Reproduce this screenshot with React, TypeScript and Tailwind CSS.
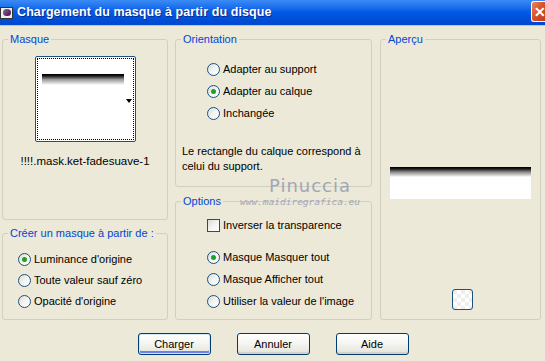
import React from "react";

function Radio({ checked, label }: { checked?: boolean; label: string }) {
  return (
    <div className="flex items-center h-[22px]">
      <span className="relative w-[13px] h-[13px] rounded-full border border-[#1c5180] bg-gradient-to-br from-[#dcdcd5] via-[#f4f4f0] to-white flex items-center justify-center">
        {checked && <span className="w-[5px] h-[5px] rounded-full bg-[#21a121]" />}
      </span>
      <span className="ml-[3px]">{label}</span>
    </div>
  );
}

function Btn({ label, def }: { label: string; def?: boolean }) {
  return (
    <button
      className={
        "w-[73px] h-[22px] rounded-[3px] border border-[#003c74] bg-gradient-to-b from-white via-[#f4f4f0] to-[#e3e2d9] text-black flex items-center justify-center " +
        (def ? "shadow-[inset_0_0_0_1px_#cee7ff,inset_0_-2px_0_1px_#6982ee]" : "shadow-[inset_0_-2px_0_0_#d6d0c5]")
      }
    >
      {label}
    </button>
  );
}

const Legend = ({ children }: { children: React.ReactNode }) => (
  <legend className="ml-[5px] px-[2px] text-[#0046d5] leading-[14px]">{children}</legend>
);

export default function App() {
  return (
    <div
      className="w-[545px] h-[361px] bg-[#ece9d8] text-[11px] text-black overflow-hidden relative"
      style={{ fontFamily: '"Liberation Sans", Arial, sans-serif' }}
    >
      {/* Title bar */}
      <div className="h-[26px] bg-gradient-to-b from-[#3b8bf5] via-[#0058e6] to-[#0048cc] flex items-center border-b border-[#c8c5b4]">
        <div className="w-[15px] h-[14px] flex items-center">
          <div className="w-[13px] h-[12px] bg-[#f0f0f0] border border-[#333] flex items-center justify-center">
            <div className="w-[8px] h-[7px] rounded-full bg-gradient-to-br from-[#1a8a2a] via-[#7a2a8a] to-[#222]" />
          </div>
        </div>
        <div className="ml-[2px] text-white font-bold text-[12.5px] tracking-[0.1px] [text-shadow:1px_1px_0_#0a2a8a]">
          Chargement du masque à partir du disque
        </div>
        <div className="ml-auto w-[14px] h-[21px] self-start mt-[1px] rounded-l-[3px] border border-white border-r-0 bg-gradient-to-br from-[#e8835f] via-[#d8502a] to-[#c03a16] flex items-center justify-start pl-[2px] text-white font-bold text-[14px] leading-none">
          ✕
        </div>
      </div>

      {/* Main area */}
      <div className="flex pt-[6px] pl-[2px]">
        {/* Left column */}
        <div className="w-[166px] flex flex-col">
          <fieldset className="h-[188px] border border-[#d0d0bf] rounded-[3px]">
            <Legend>Masque</Legend>
            <div className="flex flex-col items-center">
              <div className="mt-[10px] w-[101px] h-[86px] rounded-[2px] border border-[#1c5180] bg-white p-[1px]">
                <div className="w-full h-full border border-dotted border-black relative">
                  <div className="absolute left-[4px] top-[15px] w-[82px] h-[11px] bg-gradient-to-b from-black via-[#9a9a9a] to-white" />
                  <div className="absolute right-[1px] top-[40px] w-0 h-0 border-l-[3px] border-r-[3px] border-t-[4px] border-l-transparent border-r-transparent border-t-black" />
                </div>
              </div>
              <div className="mt-[11px] text-[11.5px]">!!!!.mask.ket-fadesuave-1</div>
            </div>
          </fieldset>
          <fieldset className="mt-[6px] h-[94px] border border-[#d0d0bf] rounded-[3px]">
            <Legend>Créer un masque à partir de :</Legend>
            <div className="pl-[15px] pt-[8px]">
              <div className="flex flex-col gap-[-1px]">
                <Radio checked label="Luminance d'origine" />
                <div className="-mt-[1px]"><Radio label="Toute valeur sauf zéro" /></div>
                <div className="-mt-[1px]"><Radio label="Opacité d'origine" /></div>
              </div>
            </div>
          </fieldset>
        </div>

        {/* Middle column */}
        <div className="ml-[7px] w-[197px] flex flex-col">
          <fieldset className="h-[155px] border border-[#d0d0bf] rounded-[3px]">
            <Legend>Orientation</Legend>
            <div className="pl-[31px] pt-[12px]">
              <Radio label="Adapter au support" />
              <Radio checked label="Adapter au calque" />
              <Radio label="Inchangée" />
            </div>
            <p className="pl-[6px] mt-[20px] leading-[15px]">
              Le rectangle du calque correspond à
              <br />
              celui du support.
            </p>
          </fieldset>
          <fieldset className="mt-[7px] h-[126px] border border-[#d0d0bf] rounded-[3px]">
            <Legend>Options</Legend>
            <div className="pl-[31px] pt-[10px]">
              <div className="flex items-center h-[14px]">
                <span className="w-[13px] h-[13px] border border-[#1c5180] bg-gradient-to-br from-[#dcdcd5] via-[#f4f4f0] to-white" />
                <span className="ml-[3px]">Inverser la transparence</span>
              </div>
              <div className="mt-[14px]">
                <Radio checked label="Masque Masquer tout" />
                <Radio label="Masque Afficher tout" />
                <Radio label="Utiliser la valeur de l'image" />
              </div>
            </div>
          </fieldset>
        </div>

        {/* Right column */}
        <div className="ml-[8px] w-[161px]">
          <fieldset className="h-[288px] border border-[#d0d0bf] rounded-[3px]">
            <Legend>Aperçu</Legend>
            <div className="flex flex-col items-center">
              <div className="mt-[121px] w-[141px] h-[32px] bg-white">
                <div className="w-full h-[10px] bg-gradient-to-b from-black via-[#8a8a8a] to-white" />
              </div>
              <div className="mt-[90px] ml-[3px] w-[21px] h-[21px] rounded-[3px] border border-[#1c5180] bg-[repeating-conic-gradient(#ffffff_0_25%,#eeeeee_0_50%)] bg-[length:8px_8px]" />
            </div>
          </fieldset>
        </div>
      </div>

      {/* Buttons */}
      <div className="flex justify-center gap-[26px] mt-[13px] pl-[2px] -ml-[1px]">
        <Btn label="Charger" def />
        <Btn label="Annuler" />
        <Btn label="Aide" />
      </div>

      {/* Watermark overlay */}
      <div className="absolute left-[220px] top-[176px] w-[160px] flex flex-col items-center pointer-events-none text-[#9097b0] opacity-80">
        <div className="ml-[20px] text-[18px] leading-[20px] tracking-[1px]" style={{ fontFamily: '"DejaVu Sans", sans-serif' }}>Pinuccia</div>
        <div className="mt-[0px] text-[9.5px] leading-[12px] italic" style={{ fontFamily: '"DejaVu Sans Mono", monospace' }}>www.maidiregrafica.eu</div>
      </div>
    </div>
  );
}
